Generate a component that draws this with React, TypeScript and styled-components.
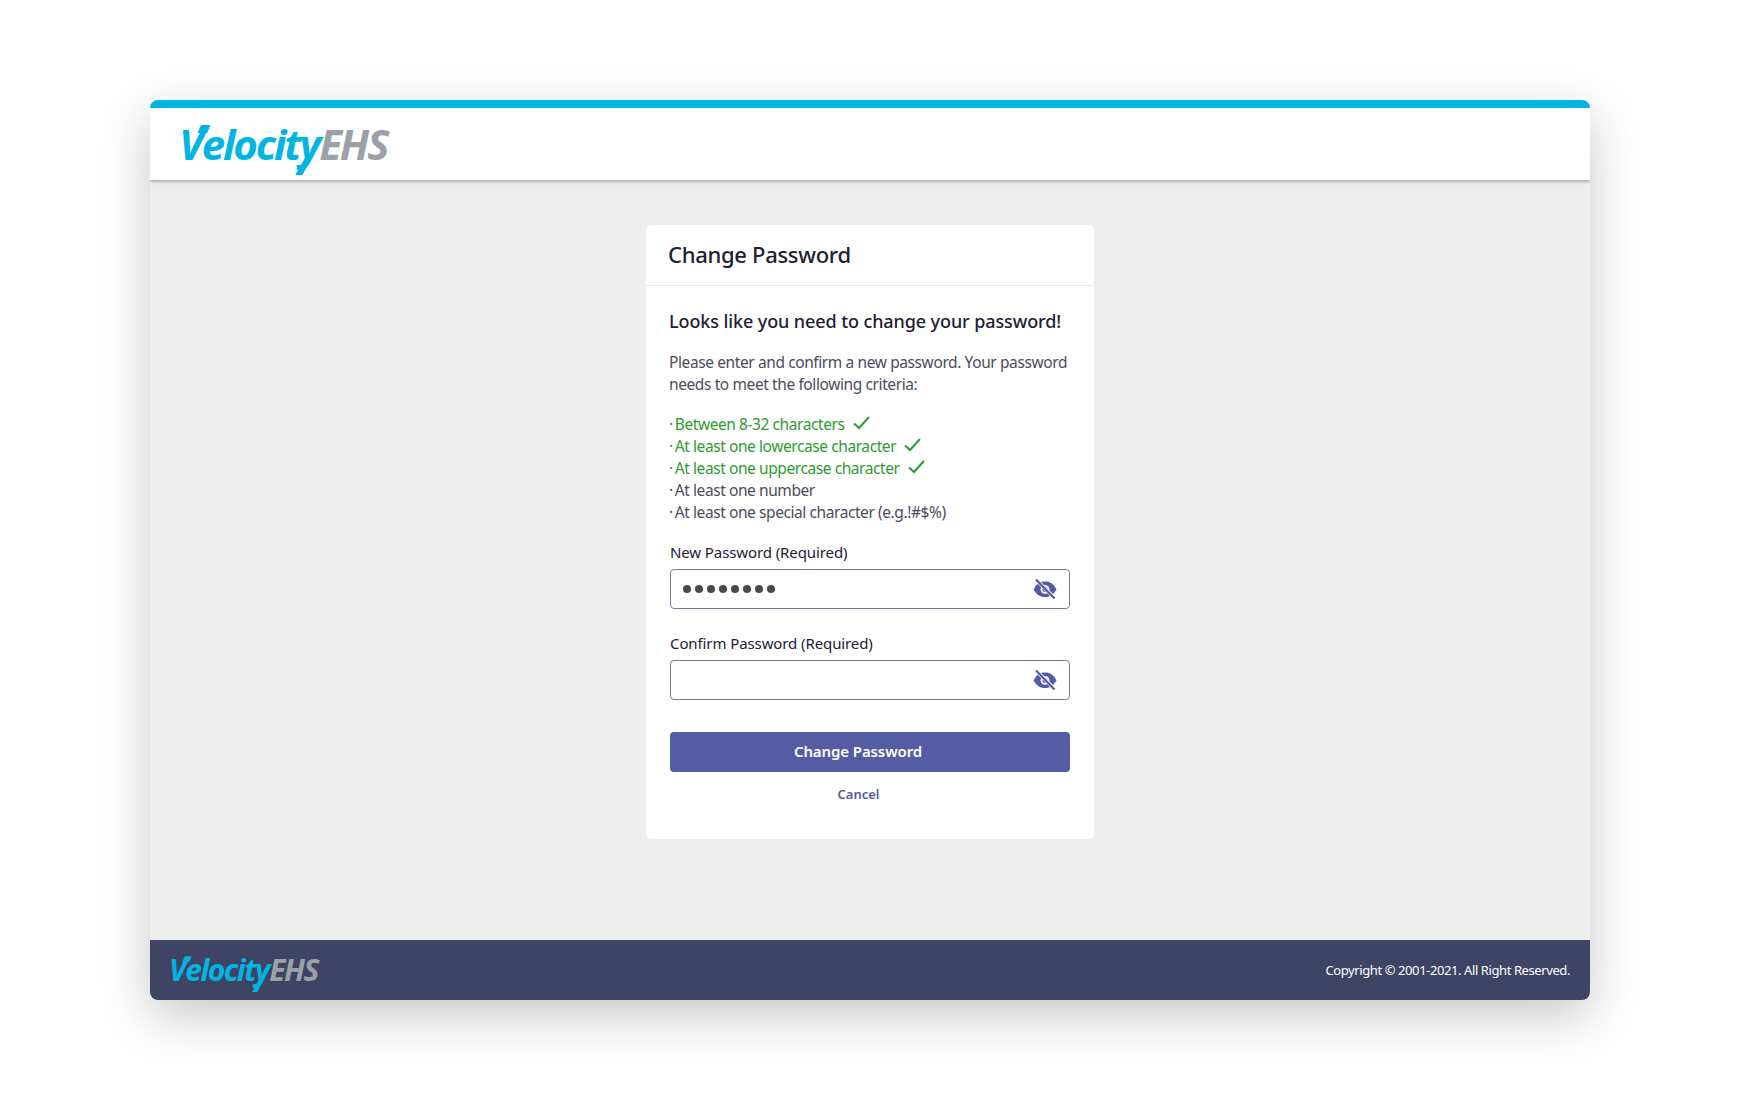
import React from "react";
import styled, { createGlobalStyle } from "styled-components";

const GlobalStyle = createGlobalStyle`
  html, body {
    margin: 0;
    padding: 0;
    background: #fff;
    font-family: "Noto Sans", "Open Sans", sans-serif;
  }
`;

const Page = styled.div`
  width: 1740px;
  height: 1100px;
  padding-top: 100px;
  box-sizing: border-box;
  overflow: hidden;
`;

const FrameShadow = styled.div`
  width: 1440px;
  height: 900px;
  margin: 0 auto;
  border-radius: 8px;
  box-shadow: 0 16px 50px rgba(0, 0, 0, 0.22);
`;

const Frame = styled.div`
  width: 1440px;
  height: 900px;
  display: flex;
  flex-direction: column;
  border-radius: 8px;
  overflow: hidden;
  background: #eee;
`;

const Header = styled.header`
  flex: none;
  box-sizing: border-box;
  height: 80px;
  display: flex;
  align-items: center;
  padding-left: 29px;
  background: #fff;
  border-top: 8px solid #00b5e2;
  box-shadow: 0 1px 4px rgba(0, 0, 0, 0.4);
  position: relative;
`;

const Main = styled.main`
  flex: 1;
  display: flex;
  justify-content: center;
  align-items: flex-start;
  padding-top: 45px;
`;

const Card = styled.section`
  width: 448px;
  height: 614px;
  background: #fff;
  border-radius: 5px;
`;

const CardHeader = styled.div`
  height: 60px;
  display: flex;
  align-items: center;
  padding-left: 22px;
  border-bottom: 1px solid #e9e9ec;
`;

const CardTitle = styled.h1`
  margin: 0 0 2px;
  font-size: 22px;
  font-weight: 500;
  letter-spacing: -0.3px;
  color: #1e2036;
`;

const CardBody = styled.div`
  padding: 21px 24px 0;
`;

const Heading = styled.h2`
  margin: 0 0 0 -1px;
  font-size: 18px;
  line-height: 28px;
  font-weight: 500;
  letter-spacing: -0.1px;
  white-space: nowrap;
  color: #1e2036;
`;

const Intro = styled.p`
  margin: 16px 0 0 -1px;
  width: 404px;
  font-size: 15.5px;
  line-height: 22px;
  letter-spacing: -0.4px;
  color: #4b4c5e;
`;

const Criteria = styled.ul`
  list-style: none;
  margin: 18px 0 0 -1px;
  padding: 0;
`;

const Criterion = styled.li<{ $met: boolean }>`
  display: flex;
  align-items: center;
  gap: 8px;
  height: 22px;
  font-size: 15.5px;
  letter-spacing: -0.42px;
  color: ${({ $met }) => ($met ? "#2d9c30" : "#4b4c5e")};
`;

const Bullet = styled.span`
  margin-right: 2px;
`;

const CheckMark = styled.svg`
  margin-bottom: 2px;
`;

const Field = styled.div<{ $gap: number }>`
  margin-top: ${({ $gap }) => $gap}px;
`;

const Label = styled.label`
  display: block;
  font-size: 15px;
  line-height: 22px;
  letter-spacing: -0.1px;
  color: #1e2036;
`;

const InputBox = styled.div`
  box-sizing: border-box;
  height: 40px;
  margin-top: 6px;
  padding: 0 12px;
  display: flex;
  align-items: center;
  justify-content: space-between;
  border: 1px solid #7b7d98;
  border-radius: 4px;
`;

const Dots = styled.span`
  display: flex;
  gap: 4px;
`;

const Dot = styled.i`
  width: 8px;
  height: 8px;
  border-radius: 50%;
  background: #4a4a4a;
`;

const SubmitButton = styled.button`
  display: block;
  box-sizing: border-box;
  width: 400px;
  height: 40px;
  margin-top: 32px;
  padding: 0 24px 2px 0;
  border: 0;
  border-radius: 4px;
  background: #545ca4;
  color: #fff;
  font-family: inherit;
  font-size: 15px;
  font-weight: 600;
  letter-spacing: -0.1px;
`;

const CancelLink = styled.a`
  display: block;
  width: 377px;
  margin-top: 13px;
  text-align: center;
  font-size: 13px;
  line-height: 18px;
  font-weight: 600;
  color: #545ca4;
`;

const Footer = styled.footer`
  height: 60px;
  flex: none;
  display: flex;
  align-items: center;
  justify-content: space-between;
  padding: 0 20px 0 19px;
  background: #404464;
`;

const Copyright = styled.span`
  font-size: 13px;
  letter-spacing: -0.41px;
  color: #fff;
`;

const LogoMark = styled.span<{ $size: number }>`
  display: inline-flex;
  align-items: baseline;
  font-family: "Open Sans", sans-serif;
  font-style: italic;
  font-weight: 700;
  font-size: ${({ $size }) => $size}px;
  line-height: 1;
  letter-spacing: -0.05em;
`;

// the tick on the V and the tail on the y rise and drop past the letters
const LogoVelocity = styled.span`
  position: relative;
  color: #00b5e2;

  &::before {
    content: "";
    position: absolute;
    left: 0.44em;
    top: 0.04em;
    width: 0.34em;
    height: 0.2em;
    background: currentColor;
    clip-path: polygon(26% 0, 92% 0, 68% 100%, 0 100%);
  }
`;

const LogoTail = styled.span`
  position: relative;

  &::after {
    content: "";
    position: absolute;
    left: -0.1em;
    top: 0.95em;
    width: 0.5em;
    height: 0.48em;
    background: currentColor;
    clip-path: polygon(54% 0, 86% 0, 34% 100%, 0 100%);
  }
`;

const LogoEhs = styled.span`
  color: #9ba1a6;
`;

const Logo = ({ size }: { size: number }) => (
  <LogoMark $size={size}>
    <LogoVelocity>
      Velocit<LogoTail>y</LogoTail>
    </LogoVelocity>
    <LogoEhs>EHS</LogoEhs>
  </LogoMark>
);

const Check = () => (
  <CheckMark width="17" height="14" viewBox="0 0 17 14" fill="none">
    <path d="M1 7.5 L6 12 L16 1" stroke="#2d9c30" strokeWidth="2" />
  </CheckMark>
);

const EyeOff = () => (
  <svg width="24" height="20" viewBox="0 0 24 20">
    <path d="M0.5 10.5 C4 3.8 8 2.6 12 2.6 C16 2.6 20 3.8 23.5 10.5 C20 16.6 16 18 12 18 C8 18 4 16.6 0.5 10.5 Z" fill="#545ca4" />
    <circle cx="12" cy="10.3" r="4.4" fill="#fff" />
    <circle cx="12" cy="10.3" r="2.6" fill="#545ca4" />
    <path d="M4 1.5 L21.5 19" stroke="#fff" strokeWidth="3.6" />
    <path d="M3 0.5 L21.5 19.5" stroke="#545ca4" strokeWidth="2.2" />
  </svg>
);

const criteria = [
  { text: "At least one lowercase character", met: true },
  { text: "At least one uppercase character", met: true },
  { text: "At least one number", met: false },
  { text: "At least one special character (e.g.!#$%)", met: false },
];

export default function App() {
  return (
    <Page>
      <GlobalStyle />
      <FrameShadow>
        <Frame>
          <Header>
            <Logo size={42} />
          </Header>
          <Main>
            <Card>
              <CardHeader>
                <CardTitle>Change Password</CardTitle>
              </CardHeader>
              <CardBody>
                <Heading>Looks like you need to change your password!</Heading>
                <Intro>
                  Please enter and confirm a new password. Your password needs to meet the following criteria:
                </Intro>
                <Criteria>
                  <Criterion $met>
                    <span>
                      <Bullet>·</Bullet>Between 8-32 characters
                    </span>
                    <Check />
                  </Criterion>
                  {criteria.map((item) => (
                    <Criterion key={item.text} $met={item.met}>
                      <span>
                        <Bullet>·</Bullet>
                        {item.text}
                      </span>
                      {item.met && <Check />}
                    </Criterion>
                  ))}
                </Criteria>
                <Field $gap={18}>
                  <Label>New Password (Required)</Label>
                  <InputBox>
                    <Dots>
                      {Array.from({ length: 8 }, (_, i) => (
                        <Dot key={i} />
                      ))}
                    </Dots>
                    <EyeOff />
                  </InputBox>
                </Field>
                <Field $gap={23}>
                  <Label>Confirm Password (Required)</Label>
                  <InputBox>
                    <span />
                    <EyeOff />
                  </InputBox>
                </Field>
                <SubmitButton>Change Password</SubmitButton>
                <CancelLink>Cancel</CancelLink>
              </CardBody>
            </Card>
          </Main>
          <Footer>
            <Logo size={30} />
            <Copyright>Copyright © 2001-2021. All Right Reserved.</Copyright>
          </Footer>
        </Frame>
      </FrameShadow>
    </Page>
  );
}
